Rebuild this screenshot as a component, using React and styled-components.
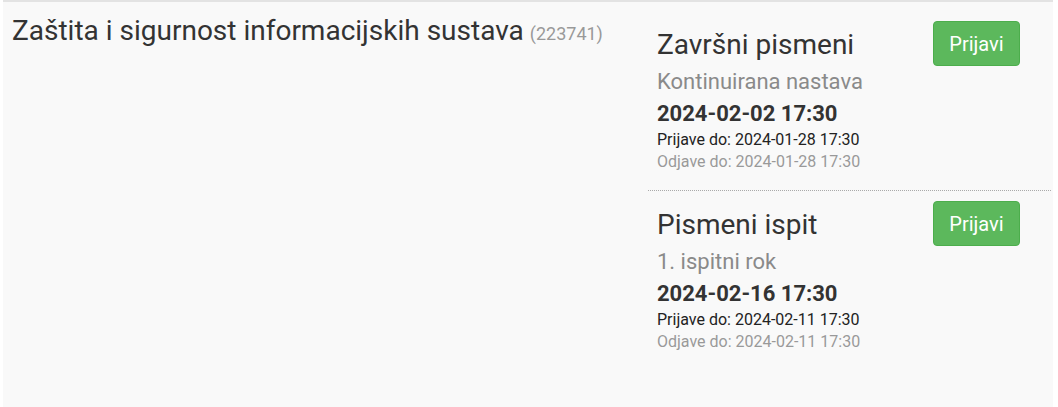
import styled, { createGlobalStyle } from "styled-components";

const GlobalStyle = createGlobalStyle`
  html, body {
    margin: 0;
    padding: 0;
    background: #fff;
    font-family: Roboto, "Liberation Sans", Arial, sans-serif;
  }
`;

const exams = [
  {
    id: 1,
    name: "Završni pismeni",
    type: "Kontinuirana nastava",
    date: "2024-02-02 17:30",
    signup: "2024-01-28 17:30",
    signoff: "2024-01-28 17:30",
  },
  {
    id: 2,
    name: "Pismeni ispit",
    type: "1. ispitni rok",
    date: "2024-02-16 17:30",
    signup: "2024-02-11 17:30",
    signoff: "2024-02-11 17:30",
  },
];

function App() {
  return (
    <>
      <GlobalStyle />
      <Panel>
        <Course>
          <CourseTitle>
            Zaštita i sigurnost informacijskih sustava
            <CourseCode>(223741)</CourseCode>
          </CourseTitle>
        </Course>
        <ExamList>
          {exams.map((exam, i) => (
            <Exam key={exam.id} $last={i === exams.length - 1}>
              <Info>
                <ExamName>{exam.name}</ExamName>
                <ExamType>{exam.type}</ExamType>
                <ExamDate>{exam.date}</ExamDate>
                <Deadline>Prijave do: {exam.signup}</Deadline>
                <Deadline $muted>Odjave do: {exam.signoff}</Deadline>
              </Info>
              <Button>Prijavi</Button>
            </Exam>
          ))}
        </ExamList>
      </Panel>
    </>
  );
}

const Panel = styled.div`
  margin-left: 3px;
  width: 1050px;
  height: 405px;
  background: #f9f9f9;
  border-top: 2px solid #e3e3e3;
  display: flex;
`;

const Course = styled.div`
  width: 645px;
  padding: 14px 0 0 9px;
  box-sizing: border-box;
`;

const CourseTitle = styled.div`
  font-size: 28px;
  line-height: 30px;
  color: #333;
`;

const CourseCode = styled.span`
  font-size: 18px;
  color: #999;
  margin-left: 6px;
`;

const ExamList = styled.div`
  width: 403px;
  padding-top: 9px;
`;

const Exam = styled.div`
  display: flex;
  justify-content: space-between;
  align-items: flex-start;
  padding: 10px 31px 17px 9px;
  border-bottom: ${(p) => (p.$last ? "none" : "1px dotted #aaa")};
`;

const Info = styled.div`
  margin-top: 4px;
  display: flex;
  flex-direction: column;
`;

const ExamName = styled.div`
  font-size: 28px;
  line-height: 40px;
  color: #333;
`;

const ExamType = styled.div`
  font-size: 22px;
  line-height: 33px;
  color: #8a8a8a;
`;

const ExamDate = styled.div`
  font-size: 22px;
  line-height: 31px;
  font-weight: 700;
  color: #333;
`;

const Deadline = styled.div`
  font-size: 16px;
  line-height: 22px;
  color: ${(p) => (p.$muted ? "#999" : "#222")};
`;

const Button = styled.button`
  width: 87px;
  height: 45px;
  padding: 0;
  background: #5cb85c;
  border: 1px solid #4cae4c;
  border-radius: 4px;
  color: #fff;
  font-family: Roboto, "Liberation Sans", Arial, sans-serif;
  font-size: 20px;
  cursor: pointer;
`;

export default App;
